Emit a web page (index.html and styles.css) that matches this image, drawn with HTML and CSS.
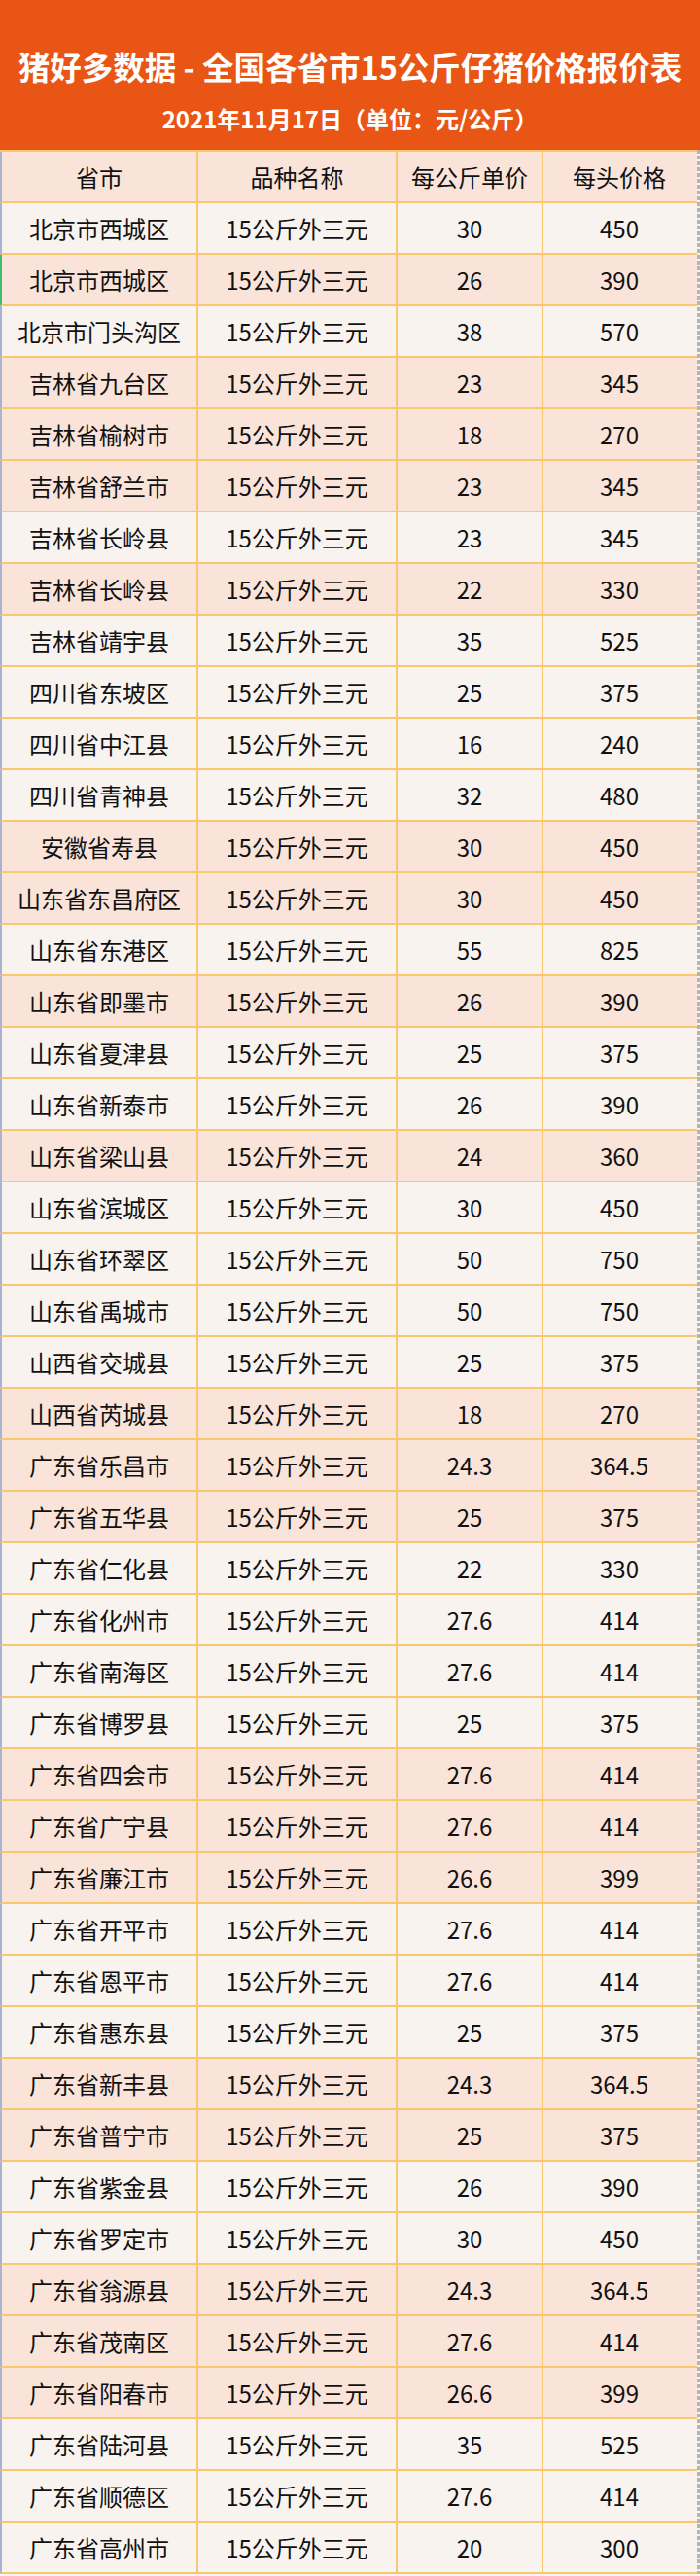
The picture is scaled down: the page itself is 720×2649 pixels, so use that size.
FILE: index.html
```html
<!DOCTYPE html>
<html lang="zh-CN">
<head>
<meta charset="utf-8">
<title>猪好多数据 - 全国各省市15公斤仔猪价格报价表</title>
<link rel="stylesheet" href="styles.css">
</head>
<body>
<header class="banner">
  <h1 class="title">猪好多数据 - 全国各省市15公斤仔猪价格报价表</h1>
  <p class="subtitle">2021年11月17日（单位：元/公斤）</p>
</header>
<div class="sheet">
  <div class="table">
    <div class="row head p"><div>省市</div><div>品种名称</div><div>每公斤单价</div><div>每头价格</div></div>
    <div class="row"><div>北京市西城区</div><div>15公斤外三元</div><div>30</div><div>450</div></div>
    <div class="row p mark"><div>北京市西城区</div><div>15公斤外三元</div><div>26</div><div>390</div></div>
    <div class="row"><div>北京市门头沟区</div><div>15公斤外三元</div><div>38</div><div>570</div></div>
    <div class="row p"><div>吉林省九台区</div><div>15公斤外三元</div><div>23</div><div>345</div></div>
    <div class="row p"><div>吉林省榆树市</div><div>15公斤外三元</div><div>18</div><div>270</div></div>
    <div class="row p"><div>吉林省舒兰市</div><div>15公斤外三元</div><div>23</div><div>345</div></div>
    <div class="row"><div>吉林省长岭县</div><div>15公斤外三元</div><div>23</div><div>345</div></div>
    <div class="row p"><div>吉林省长岭县</div><div>15公斤外三元</div><div>22</div><div>330</div></div>
    <div class="row"><div>吉林省靖宇县</div><div>15公斤外三元</div><div>35</div><div>525</div></div>
    <div class="row"><div>四川省东坡区</div><div>15公斤外三元</div><div>25</div><div>375</div></div>
    <div class="row"><div>四川省中江县</div><div>15公斤外三元</div><div>16</div><div>240</div></div>
    <div class="row"><div>四川省青神县</div><div>15公斤外三元</div><div>32</div><div>480</div></div>
    <div class="row p"><div>安徽省寿县</div><div>15公斤外三元</div><div>30</div><div>450</div></div>
    <div class="row p"><div>山东省东昌府区</div><div>15公斤外三元</div><div>30</div><div>450</div></div>
    <div class="row"><div>山东省东港区</div><div>15公斤外三元</div><div>55</div><div>825</div></div>
    <div class="row p"><div>山东省即墨市</div><div>15公斤外三元</div><div>26</div><div>390</div></div>
    <div class="row"><div>山东省夏津县</div><div>15公斤外三元</div><div>25</div><div>375</div></div>
    <div class="row"><div>山东省新泰市</div><div>15公斤外三元</div><div>26</div><div>390</div></div>
    <div class="row p"><div>山东省梁山县</div><div>15公斤外三元</div><div>24</div><div>360</div></div>
    <div class="row"><div>山东省滨城区</div><div>15公斤外三元</div><div>30</div><div>450</div></div>
    <div class="row"><div>山东省环翠区</div><div>15公斤外三元</div><div>50</div><div>750</div></div>
    <div class="row"><div>山东省禹城市</div><div>15公斤外三元</div><div>50</div><div>750</div></div>
    <div class="row"><div>山西省交城县</div><div>15公斤外三元</div><div>25</div><div>375</div></div>
    <div class="row p"><div>山西省芮城县</div><div>15公斤外三元</div><div>18</div><div>270</div></div>
    <div class="row p"><div>广东省乐昌市</div><div>15公斤外三元</div><div>24.3</div><div>364.5</div></div>
    <div class="row p"><div>广东省五华县</div><div>15公斤外三元</div><div>25</div><div>375</div></div>
    <div class="row"><div>广东省仁化县</div><div>15公斤外三元</div><div>22</div><div>330</div></div>
    <div class="row"><div>广东省化州市</div><div>15公斤外三元</div><div>27.6</div><div>414</div></div>
    <div class="row"><div>广东省南海区</div><div>15公斤外三元</div><div>27.6</div><div>414</div></div>
    <div class="row"><div>广东省博罗县</div><div>15公斤外三元</div><div>25</div><div>375</div></div>
    <div class="row p"><div>广东省四会市</div><div>15公斤外三元</div><div>27.6</div><div>414</div></div>
    <div class="row p"><div>广东省广宁县</div><div>15公斤外三元</div><div>27.6</div><div>414</div></div>
    <div class="row p"><div>广东省廉江市</div><div>15公斤外三元</div><div>26.6</div><div>399</div></div>
    <div class="row"><div>广东省开平市</div><div>15公斤外三元</div><div>27.6</div><div>414</div></div>
    <div class="row"><div>广东省恩平市</div><div>15公斤外三元</div><div>27.6</div><div>414</div></div>
    <div class="row"><div>广东省惠东县</div><div>15公斤外三元</div><div>25</div><div>375</div></div>
    <div class="row p"><div>广东省新丰县</div><div>15公斤外三元</div><div>24.3</div><div>364.5</div></div>
    <div class="row p"><div>广东省普宁市</div><div>15公斤外三元</div><div>25</div><div>375</div></div>
    <div class="row"><div>广东省紫金县</div><div>15公斤外三元</div><div>26</div><div>390</div></div>
    <div class="row"><div>广东省罗定市</div><div>15公斤外三元</div><div>30</div><div>450</div></div>
    <div class="row p"><div>广东省翁源县</div><div>15公斤外三元</div><div>24.3</div><div>364.5</div></div>
    <div class="row p"><div>广东省茂南区</div><div>15公斤外三元</div><div>27.6</div><div>414</div></div>
    <div class="row p"><div>广东省阳春市</div><div>15公斤外三元</div><div>26.6</div><div>399</div></div>
    <div class="row"><div>广东省陆河县</div><div>15公斤外三元</div><div>35</div><div>525</div></div>
    <div class="row"><div>广东省顺德区</div><div>15公斤外三元</div><div>27.6</div><div>414</div></div>
    <div class="row"><div>广东省高州市</div><div>15公斤外三元</div><div>20</div><div>300</div></div>
  </div>
  <div class="edge"></div>
</div>
</body>
</html>
```
FILE: styles.css
```css
html, body {
  margin: 0;
  padding: 0;
}
body {
  width: 720px;
  background: #f9f3ef;
  font-family: "Noto Sans CJK SC", "Noto Sans", "Liberation Sans", sans-serif;
  color: #111111;
}
.banner {
  box-sizing: border-box;
  height: 154px;
  background: #e95514;
  color: #ffffff;
  text-align: center;
  padding-top: 47px;
}
.title {
  margin: 0;
  font-size: 32.5px;
  line-height: 42px;
  font-weight: 700;
  letter-spacing: 0;
}
.subtitle {
  margin: 18px 0 0;
  font-size: 24px;
  line-height: 30px;
  font-weight: 700;
}
.sheet {
  display: flex;
}
.table {
  flex: 1;
  border-top: 2px solid #fac771;
}
.edge {
  width: 3px;
  background: repeating-linear-gradient(to bottom, #b4b4b4 0 4px, #f2f2f2 4px 6px);
}
.row {
  box-sizing: border-box;
  height: 53px;
  display: grid;
  grid-template-columns: 202px 205px 150px 156px;
  border-left: 2px solid #a9b2cf;
  border-bottom: 2px solid #fac771;
  background: #f9f3ef;
}
.row.p {
  background: #fae4d9;
}
.row.mark {
  border-left-color: #3dbb6e;
}
.row > div {
  box-sizing: border-box;
  display: flex;
  align-items: center;
  justify-content: center;
  font-size: 24px;
  line-height: 1;
  white-space: nowrap;
  border-right: 2px solid #fac771;
}
.row > div:last-child {
  border-right: none;
}
```
